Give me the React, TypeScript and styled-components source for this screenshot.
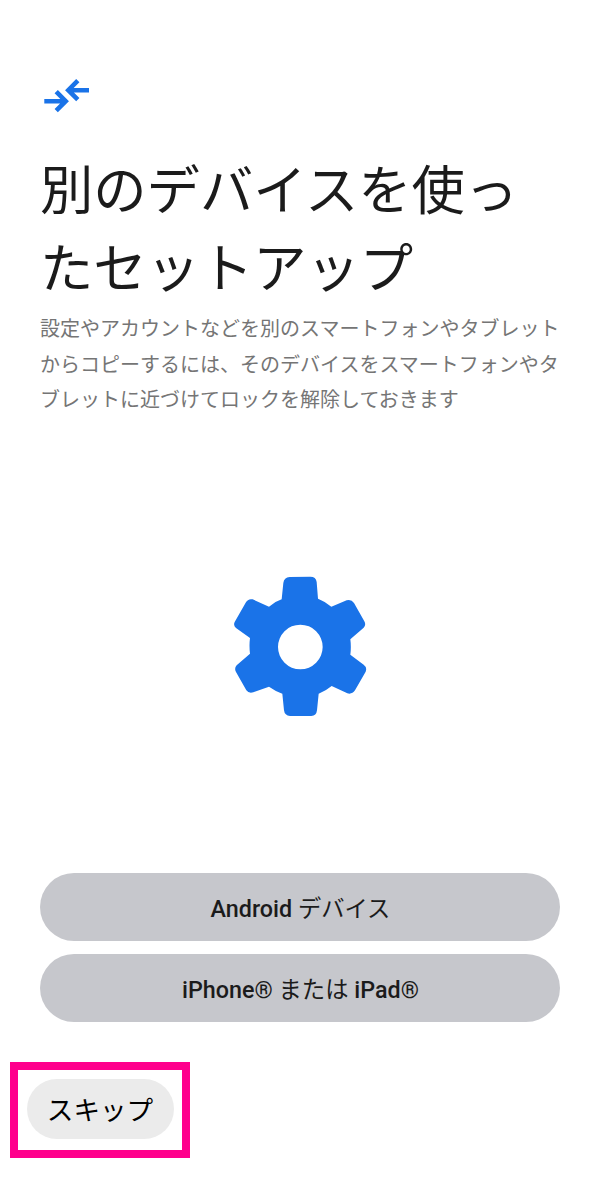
import React from "react";
import styled, { createGlobalStyle } from "styled-components";

const GlobalStyle = createGlobalStyle`
  * { box-sizing: border-box; }
  body { margin: 0; background: #fff; }
`;

const Screen = styled.main`
  display: flex;
  flex-direction: column;
  width: 600px;
  height: 1180px;
  overflow: hidden;
  background: #fff;
  color: #1b1b1b;
  font-family: Roboto, "Noto Sans CJK JP", sans-serif;
`;

const Header = styled.header`
  height: 420px;
  padding: 70px 36px 0 40px;
`;

const ArrowsIcon = styled.svg`
  display: block;
  width: 54px;
  height: 50px;
`;

const Title = styled.h1`
  margin: 33px 0 0;
  font-size: 53.3px;
  line-height: 78px;
  font-weight: 400;
  white-space: nowrap;
`;

const Description = styled.p`
  margin: 3.4px 0 0;
  font-size: 20px;
  line-height: 35.5px;
  color: #757575;
  white-space: nowrap;
`;

const Illustration = styled.section`
  display: flex;
  justify-content: center;
  height: 453px;
  padding-top: 145px;
`;

const GearIcon = styled.svg`
  width: 150px;
  height: 160px;
`;

const Choices = styled.div`
  display: flex;
  flex-direction: column;
  gap: 13.5px;
  padding: 0 40px;
`;

const ChoiceButton = styled.button`
  height: 67.5px;
  padding: 5px 0 0 1px;
  border: 0;
  border-radius: 34px;
  background: #c6c7cc;
  color: #1b1b1b;
  font: 500 23.3px/34px Roboto, "Noto Sans CJK JP", sans-serif;
`;

const Ja = styled.span`
  font-weight: 400;
`;

const Highlight = styled.div`
  display: flex;
  width: 180px;
  height: 96px;
  margin: 40.5px 0 0 10px;
  padding: 8.5px;
  border: 8px solid #ff008c;
`;

const SkipButton = styled.button`
  width: 147px;
  height: 60px;
  padding: 1px 0 0;
  border: 0;
  border-radius: 30px;
  background: #ebebeb;
  color: #000;
  font: 400 26.6px/38px "Noto Sans CJK JP", sans-serif;
`;

export default function App() {
  return (
    <>
      <GlobalStyle />
      <Screen>
        <Header>
          <ArrowsIcon viewBox="40 70 54 50" fill="none" stroke="#1a73e8" strokeWidth="4.6">
            <path d="M44.3 101.2H66M56.2 91.7l9.5 9.5-9.5 9.5M89 90.2H68M77.8 80.7l-9.5 9.5 9.5 9.5" />
          </ArrowsIcon>
          <Title>別のデバイスを使っ<br />たセットアップ</Title>
          <Description>
            設定やアカウントなどを別のスマートフォンやタブレット<br />
            からコピーするには、そのデバイスをスマートフォンやタ<br />
            ブレットに近づけてロックを解除しておきます
          </Description>
        </Header>
        <Illustration>
          <GearIcon viewBox="0 0 450 480" fill="#1a73e8">
            <path
              fillRule="evenodd"
              d="M194 36L256 35Q273 35 275 51L279 101Q302 110 319 125L365 106Q379 102 387 114L418 169Q424 180 416 188L376 223Q379 246 376 269L416 299Q427 307 422 320L390 376Q381 389 367 385L320 363Q302 378 281 386L276 436Q274 453 259 453L195 453Q179 452 177 436L172 386Q150 378 132 365L85 382Q71 386 64 376L33 321Q27 310 35 301L75 266Q72 242 75 219L33 189Q24 181 29 171L62 113Q69 100 83 103L132 125Q149 110 170 103L175 54Q177 37 194 36ZM226 179A67 67 0 1 0 226 313A67 67 0 1 0 226 179Z"
            />
          </GearIcon>
        </Illustration>
        <Choices>
          <ChoiceButton>Android <Ja>デバイス</Ja></ChoiceButton>
          <ChoiceButton>iPhone® <Ja>または</Ja> iPad®</ChoiceButton>
        </Choices>
        <Highlight>
          <SkipButton>スキップ</SkipButton>
        </Highlight>
      </Screen>
    </>
  );
}
